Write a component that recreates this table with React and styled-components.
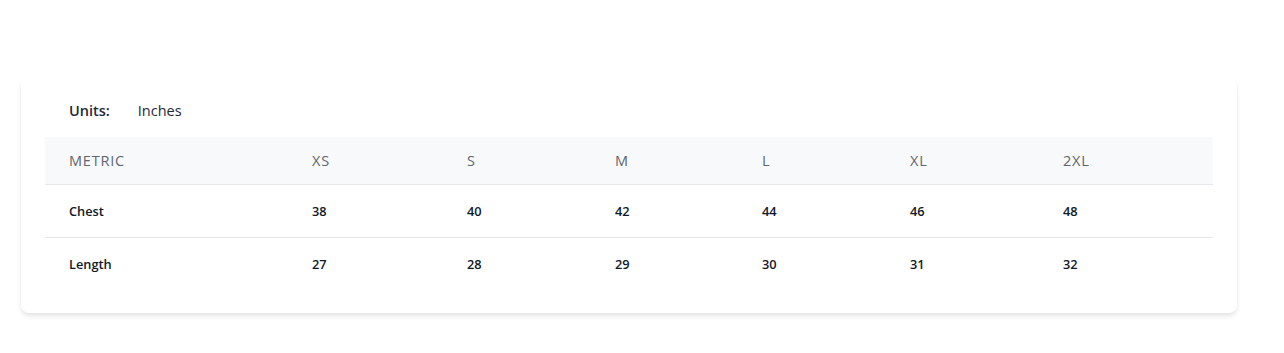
import React from "react";
import styled, { createGlobalStyle } from "styled-components";

const Global = createGlobalStyle`
  html, body { margin: 0; padding: 0; background: #ffffff; }
  body { font-family: "Open Sans", "Noto Sans", "Liberation Sans", sans-serif; color: #111827; }
  *, *::before, *::after { box-sizing: border-box; }
`;

const Page = styled.div`
  padding: 76px 47px 39px 21px;
`;

const Card = styled.section`
  background: #ffffff;
  border-radius: 8px;
  box-shadow: 0 4px 6px -1px rgba(0, 0, 0, 0.09), 0 2px 4px -1px rgba(0, 0, 0, 0.05);
  padding: 24px 24px 23px;
`;

const UnitsRow = styled.div`
  display: flex;
  align-items: center;
  gap: 28px;
  padding: 0 24px;
  height: 21px;
  margin-bottom: 16px;
  font-size: 14.5px;
  color: #1f2937;
`;

const UnitsLabel = styled.span`
  font-weight: 600;
`;

const UnitsValue = styled.span`
  font-weight: 400;
`;

const Table = styled.table`
  width: 100%;
  border-collapse: collapse;
  table-layout: fixed;
`;

const HeadRow = styled.tr`
  background: #f8f9fa;
  border-bottom: 1px solid #e5e7eb;
`;

const Th = styled.th`
  text-align: left;
  font-weight: 500;
  font-size: 14.5px;
  letter-spacing: 0.8px;
  text-transform: uppercase;
  color: #5f6670;
  padding: 0 24px;
  height: 47px;
  width: ${(p) => p.$w}px;
`;

const BodyRow = styled.tr`
  border-bottom: ${(p) => (p.$last ? "none" : "1px solid #e5e7eb")};
`;

const Td = styled.td`
  padding: 0 24px;
  height: 53px;
  font-size: 12.8px;
  font-weight: 600;
  color: #111827;
`;

const columns = [
  { key: "metric", label: "Metric", w: 243 },
  { key: "XS", label: "XS", w: 155 },
  { key: "S", label: "S", w: 148 },
  { key: "M", label: "M", w: 147 },
  { key: "L", label: "L", w: 148 },
  { key: "XL", label: "XL", w: 153 },
  { key: "2XL", label: "2XL", w: 174 },
];

const rows = [
  { metric: "Chest", XS: 38, S: 40, M: 42, L: 44, XL: 46, "2XL": 48 },
  { metric: "Length", XS: 27, S: 28, M: 29, L: 30, XL: 31, "2XL": 32 },
];

export default function App() {
  return (
    <>
      <Global />
      <Page>
        <Card>
          <UnitsRow>
            <UnitsLabel>Units:</UnitsLabel>
            <UnitsValue>Inches</UnitsValue>
          </UnitsRow>
          <Table>
            <thead>
              <HeadRow>
                {columns.map((c) => (
                  <Th key={c.key} $w={c.w}>
                    {c.label}
                  </Th>
                ))}
              </HeadRow>
            </thead>
            <tbody>
              {rows.map((r, i) => (
                <BodyRow key={r.metric} $last={i === rows.length - 1}>
                  {columns.map((c) => (
                    <Td key={c.key}>{r[c.key]}</Td>
                  ))}
                </BodyRow>
              ))}
            </tbody>
          </Table>
        </Card>
      </Page>
    </>
  );
}
